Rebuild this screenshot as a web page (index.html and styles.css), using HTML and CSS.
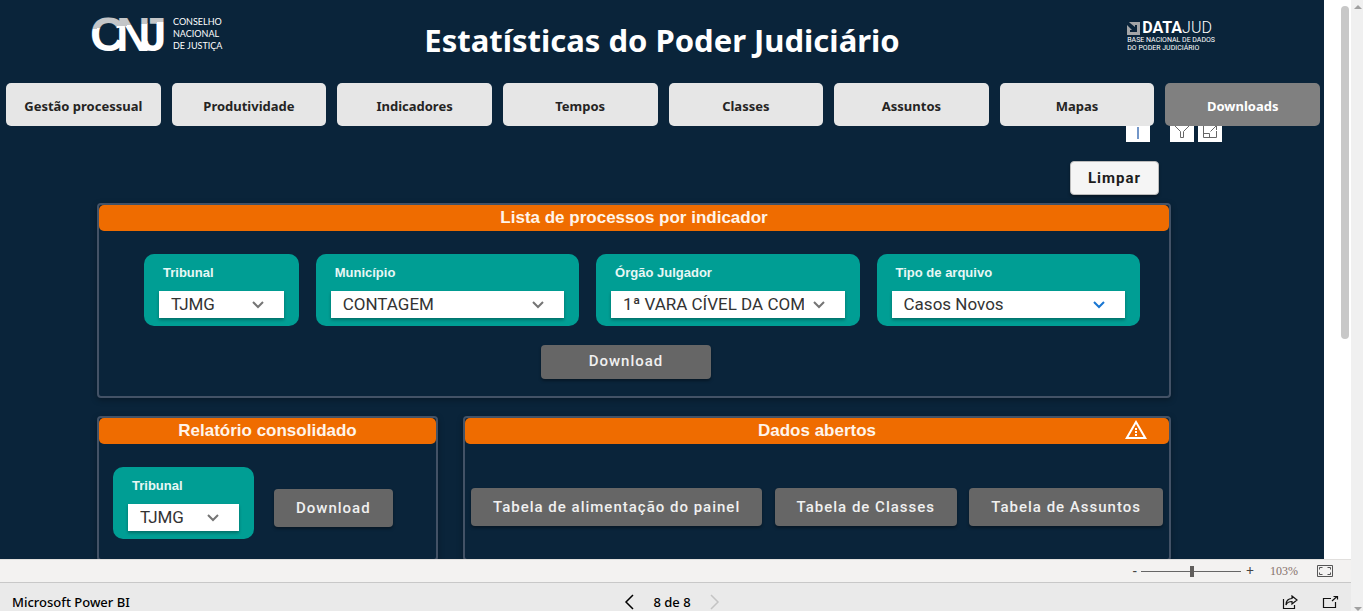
FILE: index.html
```html
<!DOCTYPE html>
<html lang="pt-BR">
<head>
<meta charset="utf-8">
<meta name="viewport" content="width=device-width, initial-scale=1">
<title>Estatísticas do Poder Judiciário</title>
<link rel="stylesheet" href="styles.css">
</head>
<body>
<div class="viewer">
  <div class="canvas">
    <main class="report">
      <header class="header">
        <div class="cnj">
          <svg class="cnj-mark" width="76" height="40" viewBox="0 0 76 40" role="img" aria-label="CNJ">
            <defs>
              <linearGradient id="mark" gradientUnits="userSpaceOnUse" x1="0" y1="14" x2="2" y2="34">
                <stop offset="0" stop-color="#c4c6c8"/>
                <stop offset="0" stop-color="#ffffff"/>
              </linearGradient>
            </defs>
            <text class="mark-letters" fill="url(#mark)" x="-2 24 48" y="36">CNJ</text>
          </svg>
          <p class="cnj-name">CONSELHO<br>NACIONAL<br>DE JUSTIÇA</p>
        </div>
        <h1 class="title">Estatísticas do Poder Judiciário</h1>
        <div class="datajud">
          <div class="datajud-brand">
            <svg width="13" height="13" viewBox="0 0 13 13" aria-hidden="true">
              <path fill="#a3a5a7" d="M2 0h11v13H0V3l5 5H3v2h7V3H8v2L3 1z"/>
            </svg>
            <span class="datajud-word"><b>DATA</b>JUD</span>
          </div>
          <p class="datajud-sub">BASE NACIONAL DE DADOS<br>DO PODER JUDICIÁRIO</p>
        </div>
      </header>

      <div class="nav-wrap">
        <div class="visual-tools">
          <button class="tool" aria-label="Informações"><svg width="24" height="24" viewBox="0 0 24 24"><path d="M12 9v12" stroke="#7396c8" stroke-width="2"/></svg></button>
          <button class="tool tool-filter" aria-label="Filtros"><svg width="24" height="24" viewBox="0 0 24 24"><path d="M4 5h16v2l-6.500 6.500v6h-3v-6L4 7z" fill="none" stroke="#666" /></svg></button>
          <button class="tool" aria-label="Modo de foco"><svg width="24" height="24" viewBox="0 0 24 24"><path d="M11 6H5.500v13.500h13V13M5.500 15.500h6v4M12.500 13.500l6-6M14 7.500h4.500V12" fill="none" stroke="#666"/></svg></button>
        </div>
        <nav class="nav">
          <button class="tab">Gestão processual</button>
          <button class="tab">Produtividade</button>
          <button class="tab">Indicadores</button>
          <button class="tab">Tempos</button>
          <button class="tab">Classes</button>
          <button class="tab">Assuntos</button>
          <button class="tab">Mapas</button>
          <button class="tab tab-active" aria-current="page">Downloads</button>
        </nav>
      </div>

      <div class="content">
        <div class="actions"><button class="btn btn-clear">Limpar</button></div>

        <section class="panel">
          <h2 class="panel-title">Lista de processos por indicador</h2>
          <div class="filters">
            <div class="field">
              <label for="tribunal">Tribunal</label>
              <div class="select"><select id="tribunal"><option>TJMG</option></select><svg class="chevron" viewBox="0 0 14 10"><path d="M2 2l5 5 5-5"/></svg></div>
            </div>
            <div class="field">
              <label for="municipio">Município</label>
              <div class="select"><select id="municipio"><option>CONTAGEM</option></select><svg class="chevron" viewBox="0 0 14 10"><path d="M2 2l5 5 5-5"/></svg></div>
            </div>
            <div class="field">
              <label for="orgao">Órgão Julgador</label>
              <div class="select"><select id="orgao"><option>1ª VARA CÍVEL DA COMARCA</option></select><svg class="chevron" viewBox="0 0 14 10"><path d="M2 2l5 5 5-5"/></svg></div>
            </div>
            <div class="field">
              <label for="tipo">Tipo de arquivo</label>
              <div class="select select-focus"><select id="tipo"><option>Casos Novos</option></select><svg class="chevron" viewBox="0 0 14 10"><path d="M2 2l5 5 5-5"/></svg></div>
            </div>
          </div>
          <div class="list-action"><button class="btn btn-list">Download</button></div>
        </section>

        <div class="row">
          <section class="panel">
            <h2 class="panel-title">Relatório consolidado</h2>
            <div class="consolidated">
              <div class="field">
                <label for="tribunal2">Tribunal</label>
                <div class="select"><select id="tribunal2"><option>TJMG</option></select><svg class="chevron" viewBox="0 0 14 10"><path d="M2 2l5 5 5-5"/></svg></div>
              </div>
              <button class="btn btn-large">Download</button>
            </div>
          </section>
          <section class="panel">
            <h2 class="panel-title">Dados abertos
              <svg class="warning" width="24" height="24" viewBox="0 0 24 24" role="img" aria-label="Aviso"><path fill="#fff" fill-rule="evenodd" d="M12 2L1 21h22L12 2zm0 4l7.500 13h-15L12 6zm-1 4v2h2v-2zm0 3v2h2v-2zm0 3v2h2v-2z"/></svg>
            </h2>
            <div class="open-data">
              <button class="btn btn-large">Tabela de alimentação do painel</button>
              <button class="btn btn-large">Tabela de Classes</button>
              <button class="btn btn-large">Tabela de Assuntos</button>
            </div>
          </section>
        </div>
      </div>
    </main>
    <div class="gutter"><div class="thumb"></div></div>
  </div>

  <div class="zoombar">
    <button class="plain zoom-sign" aria-label="Reduzir">-</button>
    <input class="slider" type="range" min="10" max="210" value="112" aria-label="Zoom">
    <button class="plain zoom-sign" aria-label="Ampliar">+</button>
    <span class="zoom-value">103%</span>
    <button class="plain" aria-label="Ajustar à página"><svg width="16" height="12" viewBox="0 0 16 12"><path d="M.5.5h15v11H.5zM2.500 4.500v-2h3M10.500 2.500h3v2M13.500 7.500v2h-3M5.500 9.500h-3v-2" fill="none" stroke="#555"/></svg></button>
  </div>

  <footer class="footer">
    <a class="brand" href="#">Microsoft Power BI</a>
    <div class="pager">
      <button class="plain" aria-label="Página anterior"><svg width="10" height="16" viewBox="0 0 10 16"><path d="M9 1L2 8l7 7" fill="none" stroke="#000" stroke-width="1.500"/></svg></button>
      <span>8 de 8</span>
      <button class="plain" aria-label="Próxima página" disabled><svg width="10" height="16" viewBox="0 0 10 16"><path d="M1 1l7 7-7 7" fill="none" stroke="#c4c4c4" stroke-width="1.500"/></svg></button>
    </div>
    <div class="share">
      <button class="plain" aria-label="Compartilhar"><svg width="17" height="14" viewBox="0 0 17 14"><path d="M1.500 4v9.500h11V10M10 1l5 4-5 4V6.500C7 6.500 5 7.500 4 10c0-4 2-6.500 6-6.500z" fill="none" stroke="#111" stroke-width="1.200"/></svg></button>
      <button class="plain" aria-label="Tela inteira"><svg width="17" height="14" viewBox="0 0 17 14"><path d="M9 3.500H1.500v9h12V7M10 6l5-4.500M11.500 1.500h4v3" fill="none" stroke="#111" stroke-width="1.200"/></svg></button>
    </div>
  </footer>
</div>
<div class="page-scroll" aria-hidden="true">
  <svg width="8" height="4" viewBox="0 0 8 4"><path d="M0 4l4-4 4 4z" fill="#a0a0a0"/></svg>
  <svg width="8" height="4" viewBox="0 0 8 4"><path d="M0 0h8L4 4z" fill="#a0a0a0"/></svg>
</div>
</body>
</html>
```

FILE: styles.css
```css
* { box-sizing: border-box; }

body {
  margin: 0;
  height: 100vh;
  display: flex;
  overflow: hidden;
  font-family: "Noto Sans", "Open Sans", sans-serif;
  background: #fff;
}

button { font: inherit; border: 0; padding: 0; cursor: pointer; }
h1, h2, p { margin: 0; }

.viewer { flex: 1; min-width: 0; display: flex; flex-direction: column; }
.canvas { flex: 1; min-height: 0; display: flex; }
.report { flex: 1; min-width: 0; overflow: hidden; background: #0a243a; }

.gutter { width: 27px; padding: 6px 2px 0 17px; background: #fff; }
.thumb { height: 333px; border-radius: 4px; background: #c8c8c8; }

.page-scroll {
  width: 12px;
  padding: 5px 0 0;
  display: flex;
  flex-direction: column;
  align-items: flex-end;
  justify-content: space-between;
  background: #f0f0f0;
}
.page-scroll svg { margin-right: 1px; }

/* Header */
.header {
  height: 83px;
  padding: 0 92px;
  display: grid;
  grid-template-columns: 1fr auto 1fr;
  align-items: start;
}
.cnj { display: flex; gap: 5px; padding-top: 15px; }
.cnj-mark { overflow: visible; }
.mark-letters { font-family: "Liberation Sans", Arial, sans-serif; font-size: 48px; font-weight: 700; }
.cnj-name { padding-top: 1px; font: 400 9px/12px Lato, sans-serif; color: #fff; white-space: nowrap; }
.title { padding-top: 18px; font-size: 31px; line-height: 44px; font-weight: 700; color: #fff; white-space: nowrap; }
.datajud { justify-self: end; padding: 20px 17px 0 0; color: #fff; }
.datajud-brand { display: flex; align-items: center; gap: 2px; height: 16px; }
.datajud-word { font: 300 16px/16px Roboto, sans-serif; }
.datajud-word b { font-weight: 700; }
.datajud-sub { font: 400 7px/8px Roboto, sans-serif; white-space: nowrap; }

/* Report navigation */
.nav-wrap { position: relative; }
.nav {
  position: relative;
  display: grid;
  grid-template-columns: repeat(8, 1fr);
  gap: 11px;
  padding: 0 4px 0 6px;
}
.tab {
  height: 43px;
  padding-top: 3px;
  border-radius: 5px;
  background: #e6e6e6;
  color: #252423;
  font-size: 13px;
  font-weight: 700;
}
.tab-active { background: #808080; color: #fff; }
.visual-tools { position: absolute; top: 35px; right: 102px; display: flex; gap: 4px; }
.tool { width: 24px; height: 24px; background: #fff; }
.tool svg { display: block; }
.tool-filter { margin-left: 16px; }

/* Content */
.content { padding: 35px 153px 0 97px; }
.actions { display: flex; justify-content: flex-end; padding-right: 12px; margin-bottom: 8px; }

.btn {
  border-radius: 4px;
  background: #666;
  color: #f0f0f0;
  font: 500 15px/20px Roboto, sans-serif;
  letter-spacing: 1px;
  white-space: nowrap;
  box-shadow: 0 2px 3px rgba(0, 0, 0, .35);
}
.btn-clear { width: 89px; height: 34px; background: #f5f5f5; color: #1c1c1c; font-weight: 700; border: 1px solid #bbb; }
.list-action { display: flex; justify-content: center; padding: 19px 16px 17px 0; }
.btn-list { width: 170px; height: 34px; padding-bottom: 2px; }
.btn-large { height: 38px; padding: 0 22px; }

.panel {
  border: 2px solid #435266;
  border-radius: 4px;
  background: #0a243a;
  box-shadow: 0 2px 6px rgba(0, 0, 0, .3);
}
.panel-title {
  position: relative;
  height: 26px;
  border-radius: 5px;
  background: #ef6c00;
  color: #fff4ea;
  font: 700 17px/25px "Liberation Sans", Arial, sans-serif;
  text-align: center;
}
.warning { position: absolute; right: 21px; top: 0; }

.filters {
  display: grid;
  grid-template-columns: 155fr 264fr 264fr 264fr;
  gap: 17px;
  padding: 23px 29px 0 45px;
}
.field { height: 72px; padding: 10px 15px; border-radius: 10px; background: #009e94; }
.field label {
  display: block;
  padding-left: 4px;
  font: 700 13px/18px "Liberation Sans", Arial, sans-serif;
  color: #e8f7f5;
}
.select { position: relative; margin-top: 9px; }
.select select {
  display: block;
  width: 100%;
  height: 27px;
  padding: 0 41px 2px 12px;
  border: 0;
  border-radius: 0;
  appearance: none;
  background: #fff;
  color: #333;
  font: 400 17px/24px Roboto, sans-serif;
  box-shadow: 0 2px 3px rgba(0, 0, 0, .3);
}
.chevron {
  position: absolute;
  right: 19px;
  top: 9px;
  width: 14px;
  height: 10px;
  fill: none;
  stroke: #757575;
  stroke-width: 2;
  pointer-events: none;
}
.select-focus .chevron { stroke: #1976d2; }

.row { display: grid; grid-template-columns: 341fr 708fr; gap: 25px; margin-top: 18px; }
.row .panel { height: 145px; }
.consolidated { display: flex; align-items: center; gap: 20px; padding: 23px 14px 0; }
.consolidated .field { width: 141px; }
.consolidated .btn { margin-top: 10px; }
.open-data { display: flex; justify-content: space-between; padding: 44px 6px 0; }

/* Zoom bar and footer */
.plain { display: flex; align-items: center; background: none; }
.zoombar {
  height: 24px;
  padding: 0 18px;
  display: flex;
  align-items: center;
  justify-content: flex-end;
  border-top: 1px solid #e1dfdd;
  border-bottom: 1px solid #c8c8c8;
  background: #f3f2f1;
  color: #605e5c;
}
.zoom-sign { font: 14px/16px "Noto Sans", sans-serif; color: #444; }
.slider { width: 100px; height: 12px; margin: 0 5px 0 4px; appearance: none; background: linear-gradient(#666, #666) center / 100% 1px no-repeat; }
.slider::-webkit-slider-thumb { appearance: none; width: 4px; height: 11px; background: #605e5c; }
.zoom-value { margin: 0 19px 0 16px; font: 12px/16px "Liberation Serif", serif; color: #85706a; }

.footer {
  height: 28px;
  padding: 10px 12px 0;
  display: grid;
  grid-template-columns: 1fr auto 1fr;
  align-items: center;
  background: #eaeaea;
  color: #000;
  font-size: 13px;
  font-weight: 500;
  line-height: 18px;
}
.brand { color: inherit; text-decoration: none; }
.pager { display: flex; align-items: center; gap: 19px; margin-right: 7px; }
.share { display: flex; justify-content: flex-end; gap: 23px; }
```
